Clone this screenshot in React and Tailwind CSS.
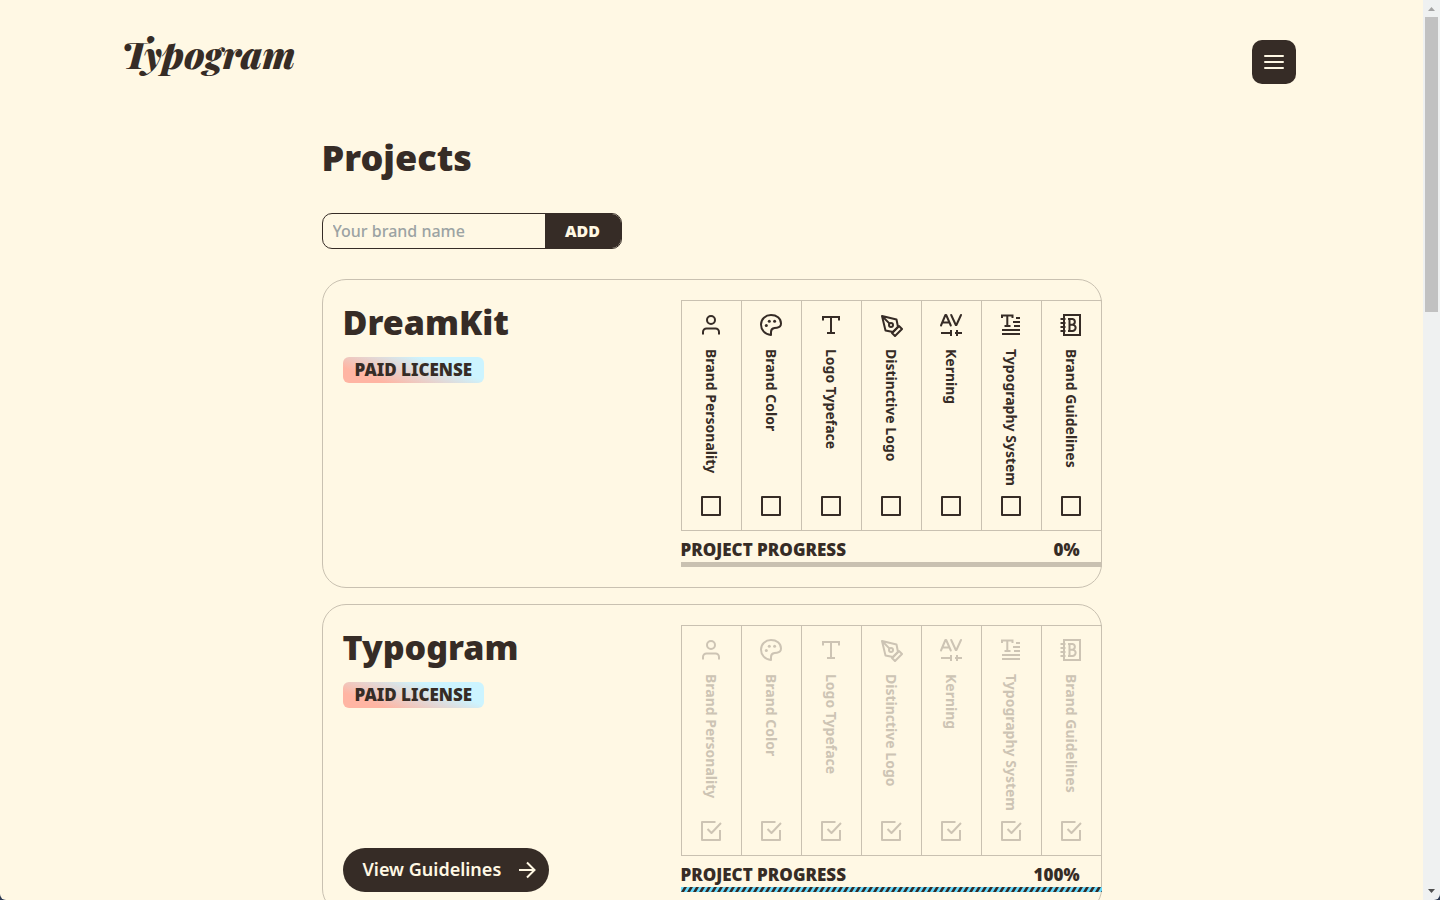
import React from "react";

function Icon({ children, className = "size-6" }) {
  return (
    <svg
      viewBox="0 0 24 24"
      fill="none"
      stroke="currentColor"
      strokeWidth="2"
      aria-hidden="true"
      className={`${className} shrink-0`}
    >
      {children}
    </svg>
  );
}

const steps = [
  {
    name: "Brand Personality",
    icon: (
      <>
        <circle cx="12" cy="7" r="4" />
        <path d="M4 21.500V19a3.500 3.500 0 0 1 3.500-3.500h9A3.500 3.500 0 0 1 20 19v2.500" />
      </>
    ),
  },
  {
    name: "Brand Color",
    icon: (
      <>
        <path d="M12 22C6 21.500 2 17 2 11.500 2 6 6.500 2 12 2s10 3.200 10 8.500c0 2.500-1.500 3.800-4 4.200l-2.500.4C13 15.500 12 17 12 19z" strokeLinejoin="round" />
        <circle cx="7.300" cy="12.400" r="1.500" fill="currentColor" stroke="none" />
        <circle cx="10.300" cy="8.200" r="1.500" fill="currentColor" stroke="none" />
        <circle cx="15.600" cy="8.200" r="1.500" fill="currentColor" stroke="none" />
      </>
    ),
  },
  {
    name: "Logo Typeface",
    icon: <path d="M4 7.500V4h16v3.500M12 4v16M8 20h8" />,
  },
  {
    name: "Distinctive Logo",
    icon: (
      <>
        <path d="m12 19 7-7 3 3-7 7-3-3z" strokeLinejoin="round" transform="translate(1 1)" />
        <path d="m18 13-1.500-7.500L2 2l3.500 14.500L13 18l5-5zM2 2l7.600 7.600" strokeLinejoin="round" transform="translate(1 1)" />
        <circle cx="12" cy="12" r="2" />
      </>
    ),
  },
  {
    name: "Kerning",
    icon: (
      <>
        <path
          d="M2 12.500 6.400 2h.8L11.800 12.500M3.600 9.500h6.500M12.200 2 16.800 12h.6L22 2"
          strokeLinejoin="round"
          strokeLinecap="round"
        />
        <path d="M2 20h10M12 17v6M16 20h7M18 17v6" />
      </>
    ),
  },
  {
    name: "Typography System",
    icon: (
      <path d="M3 5V2.500h10.500V5M8.300 2.500V13M5.500 13h6M17 5h4M14 9h7M15 13h6M3 17h18M3 21h18" />
    ),
  },
  {
    name: "Brand Guidelines",
    icon: (
      <>
        <path d="M5 2h16v20H5zM1.500 6h5M1.500 10h5M1.500 14h5M1.500 18h5" />
        <path d="M10.500 6v12M9 6h4.500a2.900 2.900 0 0 1 0 5.700H10.500M13.500 11.700a3.100 3.100 0 0 1 0 6.300H9" />
      </>
    ),
  },
];

const projects = [
  { name: "DreamKit", progress: 0 },
  { name: "Typogram", progress: 100 },
];

function Step({ step, done, id }) {
  return (
    <li className="flex-1 border-l border-[#c9c1b1]">
      <label
        htmlFor={id}
        className={`flex h-full flex-col items-center pt-3 pb-3 ${done ? "text-[#cdc4b4]" : "text-[#362c26]"}`}
      >
        <Icon>{step.icon}</Icon>
        <span className="mt-3 text-sm leading-5 font-bold whitespace-nowrap [writing-mode:vertical-rl]">
          {step.name}
        </span>
        <span className="relative mt-auto size-6">
          <input
            id={id}
            type="checkbox"
            defaultChecked={done}
            className="peer absolute inset-0 size-6 appearance-none"
          />
          <span className="pointer-events-none absolute inset-0 peer-checked:hidden">
            <Icon>
              <path d="M3 3h18v18H3z" strokeLinejoin="round" />
            </Icon>
          </span>
          <span className="pointer-events-none absolute inset-0 hidden peer-checked:block">
            <Icon>
              <path d="M16.500 3H3v18h18V11M8.500 10l4 4L22 4" strokeLinejoin="round" />
            </Icon>
          </span>
        </span>
      </label>
    </li>
  );
}

function Stripes() {
  return (
    <svg aria-hidden="true" className="block size-full">
      <defs>
        <pattern id="stripes" width="6" height="5" patternUnits="userSpaceOnUse">
          <path d="M0 0h6v5H0z" fill="#68dcff" />
          <path d="M0 5 3 0h3L3 5z" fill="#362c26" />
        </pattern>
      </defs>
      <rect width="100%" height="100%" fill="url(#stripes)" />
    </svg>
  );
}

function ProjectCard({ project }) {
  const done = project.progress === 100;
  return (
    <article className="flex justify-between rounded-3xl border border-[#c9c1b1] py-5 pl-5">
      <div className="flex flex-col items-start">
        <h2 className="text-[34px] leading-11 font-black">{project.name}</h2>
        <p className="mt-[13px] rounded-md bg-[linear-gradient(20deg,#ffb5a3_20%,#ccf4ff_70%)] px-3 text-[17px] leading-[26px] font-black">
          PAID LICENSE
        </p>
        {done && (
          <a
            href="#guidelines"
            className="mt-auto flex h-11 items-center gap-3.5 rounded-full bg-[#362c26] pr-2.5 pl-5 text-lg font-semibold text-[#fff8e4]"
          >
            <span className="pb-0.5">View Guidelines</span>
            <Icon>
              <path d="M4 12h15M12 4.500l7.500 7.500-7.500 7.500" />
            </Icon>
          </a>
        )}
      </div>
      <div className="w-[421px] -mr-px">
        <ul className="flex h-[231px] border-y border-r border-[#c9c1b1]">
          {steps.map((step) => (
            <Step
              key={step.name}
              step={step}
              done={done}
              id={`${project.name}-${step.name}`.replaceAll(" ", "-")}
            />
          ))}
        </ul>
        <div className="flex h-[31px] items-center justify-between pt-1.5 pr-[22px] text-[17px] font-black">
          <span>PROJECT PROGRESS</span>
          <span>{project.progress}%</span>
        </div>
        <div className="h-[5px] bg-[#c9c1b1]">
          <div className="h-full" style={{ width: `${project.progress}%` }}>
            {project.progress > 0 && <Stripes />}
          </div>
        </div>
      </div>
    </article>
  );
}

export default function App() {
  return (
    <div className="flex h-screen overflow-hidden bg-[#2b3852] font-['Noto_Sans',sans-serif] text-[#362c26]">
      <div className="flex-1 overflow-y-auto rounded-bl-md bg-[#fff8e4] [scrollbar-width:none]">
        <header className="mx-auto flex max-w-[1180px] items-start justify-between pt-10 pr-1.5">
          <a
            href="#home"
            className="text-[37px] leading-7 font-black italic font-['Playfair_Display','Liberation_Serif',serif]"
          >
            Typogram
          </a>
          <button
            type="button"
            aria-label="Menu"
            className="flex size-11 items-center justify-center rounded-[10px] bg-[#362c26] text-[#fff8e4]"
          >
            <Icon>
              <path d="M3 6h18M3 12h18M3 18h18" strokeLinecap="round" />
            </Icon>
          </button>
        </header>
        <main className="mx-auto max-w-[780px] pt-13 pb-10">
          <h1 className="text-4xl leading-11 font-black">Projects</h1>
          <form className="mt-[33px] flex h-9 w-[300px] overflow-hidden rounded-[10px] border border-[#362c26]">
            <input
              type="text"
              aria-label="Your brand name"
              placeholder="Your brand name"
              className="min-w-0 flex-1 px-2.5 text-base font-medium outline-none placeholder:text-[#9ca3a3]"
            />
            <button type="button" className="w-[76px] bg-[#362c26] text-base font-black text-[#fff8e4]">
              ADD
            </button>
          </form>
          <div className="mt-[30px] flex flex-col gap-4">
            {projects.map((project) => (
              <ProjectCard key={project.name} project={project} />
            ))}
          </div>
        </main>
      </div>
      <div
        aria-hidden="true"
        className="flex w-[17px] flex-col items-center rounded-br-md bg-[#eff1f1] text-[#a3a3a3]"
      >
        <svg viewBox="0 0 17 17" className="size-[17px]" fill="currentColor">
          <path d="M5 11h7L8.500 7z" />
        </svg>
        <div className="h-[295px] w-[13px] bg-[#c1c1c1]" />
        <svg viewBox="0 0 17 17" className="mt-auto size-[17px] text-[#505050]" fill="currentColor">
          <path d="M5 6h7l-3.500 4z" />
        </svg>
      </div>
    </div>
  );
}
